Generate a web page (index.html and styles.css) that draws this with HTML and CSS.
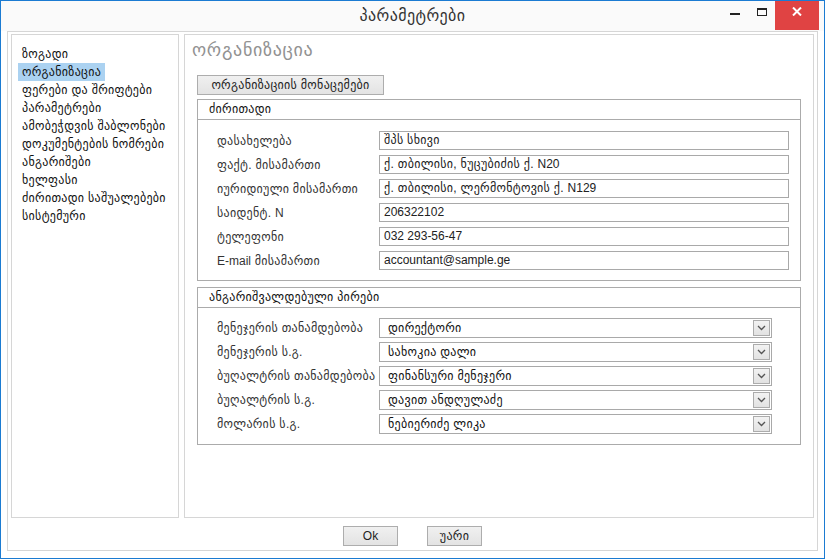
FILE: index.html
```html
<!DOCTYPE html>
<html lang="ka">
<head>
<meta charset="utf-8">
<title>პარამეტრები</title>
<link rel="stylesheet" href="styles.css">
</head>
<body>
<div class="window">
  <div class="titlebar">
    <div></div>
    <div class="title">პარამეტრები</div>
    <div class="controls">
      <div class="ctl ctl-min"><span class="min-icon"></span></div>
      <div class="ctl ctl-max"><span class="max-icon"></span></div>
      <div class="ctl ctl-close">
        <svg width="10" height="9" viewBox="0 0 10 9"><path d="M1 0.5 L9 8.5 M9 0.5 L1 8.5" stroke="#fff" stroke-width="2" fill="none"/></svg>
      </div>
    </div>
  </div>
  <div class="panel">
    <div class="boxes">
      <div class="sidebar">
        <div class="nav-item">ზოგადი</div>
        <div class="nav-item"><span class="sel">ორგანიზაცია</span></div>
        <div class="nav-item">ფერები და შრიფტები</div>
        <div class="nav-item">პარამეტრები</div>
        <div class="nav-item">ამობეჭდვის შაბლონები</div>
        <div class="nav-item">დოკუმენტების ნომრები</div>
        <div class="nav-item">ანგარიშები</div>
        <div class="nav-item">ხელფასი</div>
        <div class="nav-item">ძირითადი საშუალებები</div>
        <div class="nav-item">სისტემური</div>
      </div>
      <div class="main">
        <div class="heading">ორგანიზაცია</div>
        <div class="content">
          <div class="tab">ორგანიზაციის მონაცემები</div>
          <div class="group">
            <div class="group-head">ძირითადი</div>
            <div class="group-body">
              <div class="label">დასახელება</div><div class="input">შპს სხივი</div>
              <div class="label">ფაქტ. მისამართი</div><div class="input">ქ. თბილისი, ნუცუბიძის ქ. <span class="latin">N20</span></div>
              <div class="label">იურიდიული მისამართი</div><div class="input">ქ. თბილისი, ლერმონტოვის ქ. <span class="latin">N129</span></div>
              <div class="label">საიდენტ. <span class="latin">N</span></div><div class="input latin">206322102</div>
              <div class="label">ტელეფონი</div><div class="input latin">032 293-56-47</div>
              <div class="label"><span class="latin">E-mail</span> მისამართი</div><div class="input latin">accountant@sample.ge</div>
            </div>
          </div>
          <div class="group group-2">
            <div class="group-head">ანგარიშვალდებული პირები</div>
            <div class="group-body sel-body">
              <div class="label">მენეჯერის თანამდებობა</div>
              <div class="select"><span class="sel-text">დირექტორი</span><span class="drop"><svg width="9" height="6" viewBox="0 0 9 6"><path d="M1 1 L4.5 4.5 L8 1" stroke="#555" stroke-width="1.3" fill="none"/></svg></span></div>
              <div class="label">მენეჯერის ს.გ.</div>
              <div class="select"><span class="sel-text">სახოკია დალი</span><span class="drop"><svg width="9" height="6" viewBox="0 0 9 6"><path d="M1 1 L4.5 4.5 L8 1" stroke="#555" stroke-width="1.3" fill="none"/></svg></span></div>
              <div class="label">ბუღალტრის თანამდებობა</div>
              <div class="select"><span class="sel-text">ფინანსური მენეჯერი</span><span class="drop"><svg width="9" height="6" viewBox="0 0 9 6"><path d="M1 1 L4.5 4.5 L8 1" stroke="#555" stroke-width="1.3" fill="none"/></svg></span></div>
              <div class="label">ბუღალტრის ს.გ.</div>
              <div class="select"><span class="sel-text">დავით ანდღულაძე</span><span class="drop"><svg width="9" height="6" viewBox="0 0 9 6"><path d="M1 1 L4.5 4.5 L8 1" stroke="#555" stroke-width="1.3" fill="none"/></svg></span></div>
              <div class="label">მოლარის ს.გ.</div>
              <div class="select"><span class="sel-text">ნებიერიძე ლიკა</span><span class="drop"><svg width="9" height="6" viewBox="0 0 9 6"><path d="M1 1 L4.5 4.5 L8 1" stroke="#555" stroke-width="1.3" fill="none"/></svg></span></div>
            </div>
          </div>
        </div>
      </div>
    </div>
    <div class="footer">
      <div class="btn latin">Ok</div>
      <div class="btn">უარი</div>
    </div>
  </div>
</div>
</body>
</html>
```
FILE: styles.css
```css
* { box-sizing: border-box; }
html, body { margin: 0; padding: 0; }
body {
  width: 825px;
  height: 559px;
  overflow: hidden;
  font-family: "Liberation Sans", "DejaVu Sans", sans-serif;
  font-size: 12px;
  letter-spacing: 0.3px;
  color: #222;
  background: #fff;
}
.latin { letter-spacing: 0; }
.window {
  width: 825px;
  height: 559px;
  border: 1px solid #1b7bd2;
  display: flex;
  flex-direction: column;
  background: #fff;
}
.titlebar {
  height: 30px;
  flex: none;
  display: grid;
  grid-template-columns: 1fr auto 1fr;
  background: #fafafa;
}
.title {
  line-height: 30px;
  font-size: 16px;
  letter-spacing: 0.4px;
  color: #333;
}
.controls {
  justify-self: end;
  display: flex;
  margin-right: 5px;
  height: 29px;
}
.ctl {
  width: 26px;
  height: 29px;
  display: flex;
  justify-content: center;
}
.ctl-min { padding-right: 2px; }
.min-icon {
  display: block;
  width: 10px;
  height: 2px;
  margin-top: 12px;
  background: #222;
}
.max-icon {
  display: block;
  width: 10px;
  height: 8px;
  margin-top: 7px;
  border: 1px solid #222;
  border-top-width: 2px;
}
.ctl-close {
  width: 44px;
  background: #e04343;
  padding-top: 6px;
}
.panel {
  flex: 1;
  margin: 0 6px 7px 6px;
  border: 1px solid #d6d6d6;
  padding: 2px 3px 0 3px;
  display: flex;
  flex-direction: column;
}
.boxes {
  display: flex;
  gap: 5px;
  height: 484px;
}
.sidebar {
  width: 168px;
  border: 1px solid #d6d6d6;
  padding: 10px 6px;
}
.nav-item {
  height: 18px;
  line-height: 18px;
  color: #111;
  white-space: nowrap;
}
.nav-item, .sel { padding: 0 4px; }
.nav-item .sel { margin-left: -4px; display: inline-block; background: #abd2f1; }
.main {
  flex: 1;
  border: 1px solid #d6d6d6;
  padding: 3px 12px 0 7px;
}
.heading {
  font-size: 18px;
  line-height: 24px;
  letter-spacing: 0.7px;
  color: #929292;
}
.content { padding-left: 5px; }
.tab {
  margin-top: 13px;
  width: 187px;
  height: 20px;
  line-height: 18px;
  text-align: center;
  border: 1px solid #adadad;
  background: linear-gradient(#f0f0f0, #e3e3e3);
  color: #222;
}
.group {
  margin-top: 4px;
  border: 1px solid #ababab;
}
.group-2 { margin-top: 6px; }
.group-head {
  height: 20px;
  line-height: 18px;
  border-bottom: 1px solid #ababab;
  padding-left: 11px;
  color: #111;
}
.group-body {
  display: grid;
  grid-template-columns: 162px 1fr;
  row-gap: 5px;
  padding: 11px 11px 10px 19px;
  align-items: center;
}
.label {
  color: #333;
  white-space: nowrap;
}
.input {
  height: 19px;
  line-height: 17px;
  border: 1px solid #a9a9a9;
  padding-left: 4px;
  color: #222;
  white-space: nowrap;
}
.sel-body {
  row-gap: 4px;
  padding-top: 10px;
}
.select {
  width: 393px;
  height: 20px;
  border: 1px solid #a9a9a9;
  display: flex;
  align-items: center;
  justify-content: space-between;
  padding-left: 8px;
  padding-right: 1px;
  color: #111;
}
.drop {
  width: 17px;
  height: 16px;
  border: 1px solid #acacac;
  background: linear-gradient(#f2f2f2, #e2e2e2);
  display: flex;
  align-items: center;
  justify-content: center;
}
.footer {
  flex: 1;
  display: flex;
  justify-content: center;
  gap: 29px;
  padding-top: 8px;
}
.btn {
  width: 55px;
  height: 20px;
  line-height: 18px;
  text-align: center;
  border: 1px solid #adadad;
  background: linear-gradient(#f0f0f0, #e3e3e3);
  color: #222;
}
```
